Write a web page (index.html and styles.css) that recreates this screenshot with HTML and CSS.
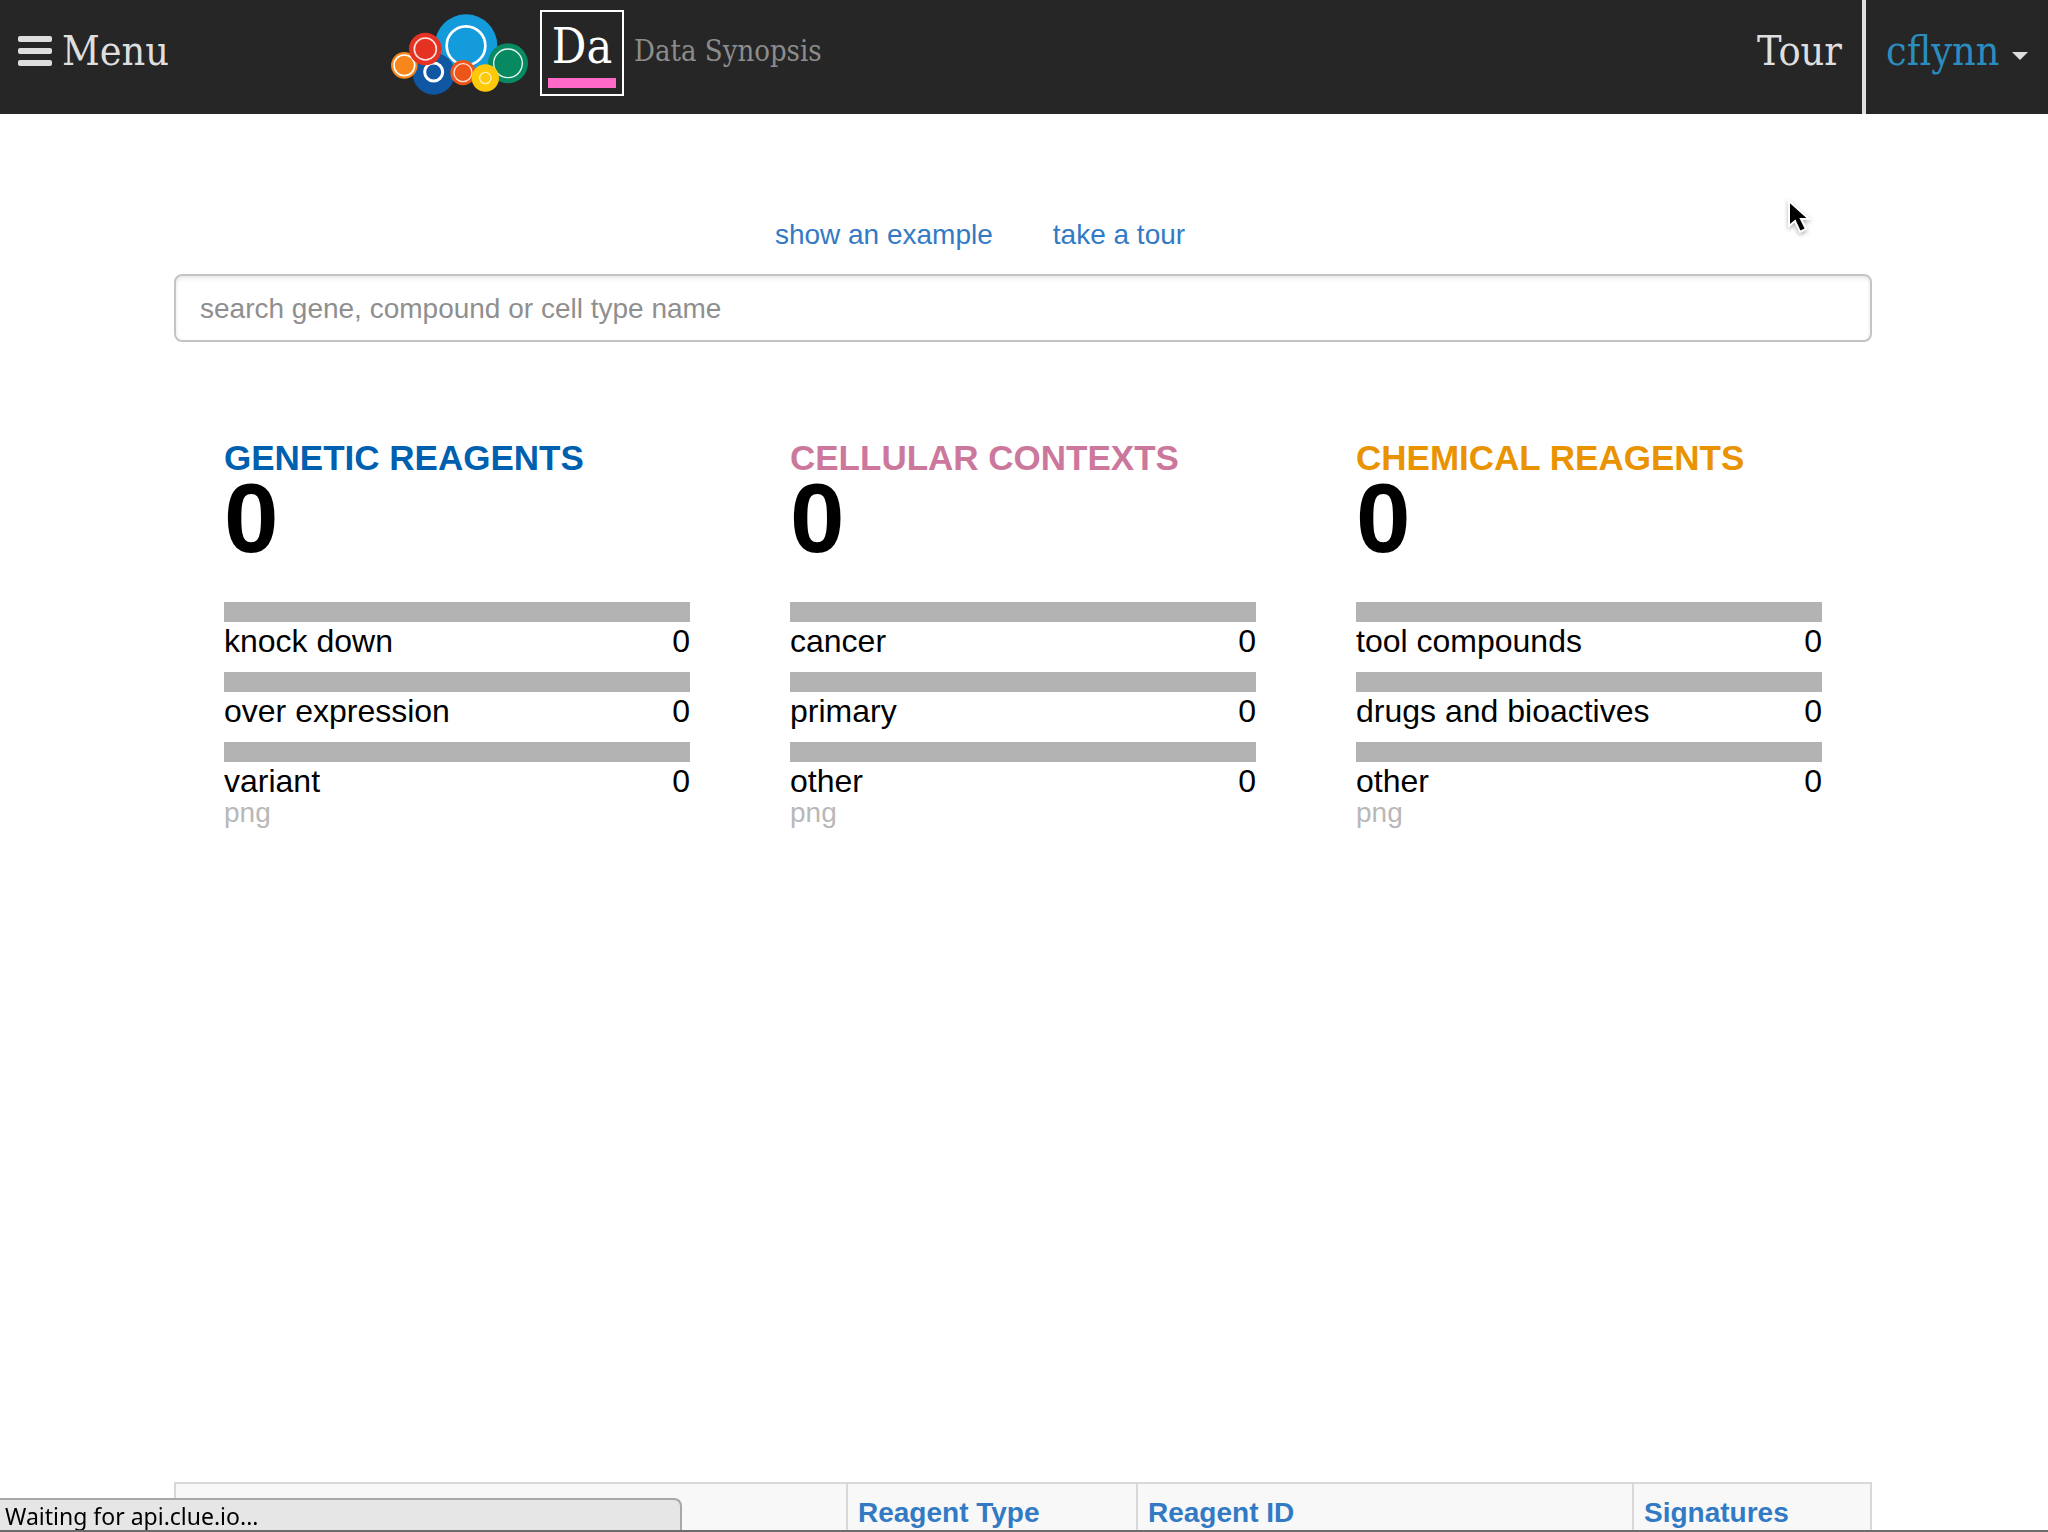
FILE: index.html
```html
<!DOCTYPE html>
<html lang="en">
<head>
<meta charset="utf-8">
<title>Data Synopsis</title>
<link rel="stylesheet" href="styles.css">
</head>
<body>
<header class="topbar">
  <button class="menu-button" type="button">
    <svg class="menu-icon" viewBox="0 0 34 30" aria-hidden="true"><rect y="0" width="34" height="6" rx="2"/><rect y="12" width="34" height="6" rx="2"/><rect y="24" width="34" height="6" rx="2"/></svg>
    Menu
  </button>
  <div class="brand">
    <svg class="logo" viewBox="30 40 417 243" role="img" aria-label="clue">
      <circle cx="258" cy="135" r="94" fill="#149bdc"/>
      <circle cx="258" cy="135" r="58" fill="none" stroke="#fff" stroke-width="8"/>
      <circle cx="161" cy="219" r="63" fill="#0f56a3"/>
      <circle cx="161" cy="214" r="27" fill="none" stroke="#fff" stroke-width="9"/>
      <circle cx="73" cy="194" r="40" fill="#f7861b"/>
      <circle cx="73" cy="194" r="31" fill="none" stroke="#fff" stroke-width="5"/>
      <circle cx="136" cy="145" r="49" fill="#e63223"/>
      <circle cx="136" cy="145" r="33" fill="none" stroke="#ffe3df" stroke-width="5"/>
      <circle cx="384" cy="188" r="60" fill="#078a62"/>
      <circle cx="384" cy="188" r="43" fill="none" stroke="#e9f7f1" stroke-width="4"/>
      <circle cx="249" cy="216" r="38" fill="#ee5519"/>
      <circle cx="249" cy="216" r="27" fill="none" stroke="#ffe3d6" stroke-width="4"/>
      <circle cx="316" cy="232" r="41" fill="#ffc907"/>
      <circle cx="316" cy="232" r="17" fill="none" stroke="#fff3b8" stroke-width="4"/>
    </svg>
    <a class="app-tile" href="#">Da</a>
    <span class="app-name">Data Synopsis</span>
  </div>
  <nav class="account">
    <a class="tour-link" href="#">Tour</a>
    <button class="user-button" type="button">cflynn<span class="caret"></span></button>
  </nav>
</header>

<main class="page">
  <div class="hints">
    <a href="#">show an example</a>
    <a href="#">take a tour</a>
  </div>
  <input class="search" type="search" aria-label="Search" placeholder="search gene, compound or cell type name">

  <div class="summary">
    <section class="group">
      <h2 class="group-title genetic">GENETIC REAGENTS</h2>
      <p class="total">0</p>
      <ul class="counts">
        <li><span>knock down</span><span>0</span></li>
        <li><span>over expression</span><span>0</span></li>
        <li><span>variant</span><span>0</span></li>
      </ul>
      <a class="export" href="#">png</a>
    </section>
    <section class="group">
      <h2 class="group-title cellular">CELLULAR CONTEXTS</h2>
      <p class="total">0</p>
      <ul class="counts">
        <li><span>cancer</span><span>0</span></li>
        <li><span>primary</span><span>0</span></li>
        <li><span>other</span><span>0</span></li>
      </ul>
      <a class="export" href="#">png</a>
    </section>
    <section class="group">
      <h2 class="group-title chemical">CHEMICAL REAGENTS</h2>
      <p class="total">0</p>
      <ul class="counts">
        <li><span>tool compounds</span><span>0</span></li>
        <li><span>drugs and bioactives</span><span>0</span></li>
        <li><span>other</span><span>0</span></li>
      </ul>
      <a class="export" href="#">png</a>
    </section>
  </div>

  <table class="results">
    <colgroup><col class="col-name"><col class="col-type"><col class="col-id"><col class="col-sigs"></colgroup>
    <thead>
      <tr><th></th><th><a href="#">Reagent Type</a></th><th><a href="#">Reagent ID</a></th><th><a href="#">Signatures</a></th></tr>
    </thead>
  </table>
</main>

<div class="status">Waiting for api.clue.io...</div>
<div class="window-edge"></div>
<svg class="pointer" viewBox="0 0 24 38" aria-hidden="true"><path d="M2 2V27L8 22L13 33L19 30L14 20H22Z" fill="#000" stroke="#fff" stroke-width="2"/></svg>
</body>
</html>
```
FILE: styles.css
```css
* { box-sizing: border-box; }

body {
  height: 100vh;
  margin: 0;
  overflow: hidden;
  background: #fff;
  color: #000;
  font-family: "Helvetica Neue", Helvetica, "Liberation Sans", Arial, sans-serif;
  font-size: 28px;
  line-height: 40px;
}

a { color: #337ac4; text-decoration: none; }

button {
  padding: 0;
  border: 0;
  background: none;
  color: inherit;
  font: inherit;
  cursor: pointer;
}

.topbar {
  display: flex;
  height: 114px;
  background: #262626;
  color: #dedede;
  font-family: "Roboto Slab", "DejaVu Serif Condensed", "DejaVu Serif", serif;
  font-size: 41px;
  line-height: 102px;
}

.menu-button {
  display: flex;
  align-items: center;
  gap: 10px;
  width: 390px;
  height: 102px;
  padding-left: 18px;
}

.menu-icon { width: 34px; height: 30px; fill: currentColor; }

.brand { display: flex; align-items: flex-start; }

.logo { width: 139px; height: 81px; margin-top: 14px; }

.app-tile {
  display: flex;
  flex-direction: column;
  justify-content: space-between;
  width: 84px;
  height: 86px;
  margin: 10px 10px 0 11px;
  padding: 6px;
  border: 2px solid #fff;
  color: #fff;
  font-size: 48px;
  line-height: 56px;
  text-align: center;
}

.app-tile::after { content: ""; height: 10px; background: #ff69c8; }

.app-name { color: #8c8c8c; font-size: 29px; line-height: 102px; }

.account { display: flex; margin-left: auto; }

.tour-link {
  padding-right: 20px;
  border-right: 4px solid #dedede;
  color: inherit;
}

.user-button {
  display: flex;
  align-items: center;
  justify-content: space-between;
  width: 182px;
  height: 102px;
  padding: 0 20px;
  color: #2b8cbe;
}

.caret {
  margin-top: 10px;
  border: 8px solid transparent;
  border-top-color: #dedede;
  border-bottom: 0;
}

.page { padding: 100px 176px 0 174px; }

.hints {
  display: flex;
  justify-content: center;
  gap: 60px;
  padding-right: 86px;
  line-height: 42px;
}

.search {
  display: block;
  width: 100%;
  height: 68px;
  margin-top: 18px;
  padding: 2px 24px 0;
  border: 2px solid #c4c4c4;
  border-radius: 8px;
  background: #fff;
  box-shadow: inset 0 2px 4px rgba(0, 0, 0, 0.1);
  font: inherit;
  appearance: none;
}

.search::placeholder { color: #8f8f8f; opacity: 1; }

.summary {
  display: grid;
  grid-template-columns: repeat(3, 1fr);
  min-height: 1140px;
  padding-top: 96px;
}

.group { padding: 0 50px; }

.group-title { margin: 0; font-size: 35px; line-height: 40px; white-space: nowrap; }
.genetic { color: #0060b0; }
.cellular { color: #cc789c; }
.chemical { color: #ea9300; }

.total {
  margin: 0 0 44px;
  font-size: 98px;
  font-weight: bold;
  line-height: 80px;
}

.counts { margin: 0; padding: 0; list-style: none; font-size: 32px; line-height: 38px; }

.counts li {
  display: flex;
  justify-content: space-between;
  height: 70px;
  border-top: 20px solid #b3b3b3;
}

.counts li:last-child { height: 60px; }

.export { display: block; color: #b8b8b8; line-height: 22px; }

.results {
  width: 100%;
  border-collapse: collapse;
  table-layout: fixed;
  border: 2px solid #d8d8d8;
  background: #f8f8f8;
}

.col-name { width: 672px; }
.col-type { width: 290px; }
.col-id { width: 496px; }

.results th {
  height: 60px;
  padding: 8px 10px;
  border-left: 2px solid #d8d8d8;
  text-align: left;
}

.status {
  position: fixed;
  bottom: 0;
  left: 0;
  width: 682px;
  height: 34px;
  padding-left: 5px;
  border: 2px solid #a8a8a8;
  border-width: 2px 2px 0 0;
  border-radius: 0 8px 0 0;
  background: #e6e6e6;
  font-family: "Lucida Grande", "Noto Sans", sans-serif;
  font-size: 23px;
  line-height: 32px;
}

.window-edge {
  position: fixed;
  right: 0;
  bottom: 0;
  left: 0;
  height: 2px;
  background: #6c6c6c;
}

.pointer {
  position: absolute;
  top: 199px;
  left: 1787px;
  width: 24px;
  height: 38px;
  filter: drop-shadow(0 2px 2px rgba(0, 0, 0, 0.3));
}
```
